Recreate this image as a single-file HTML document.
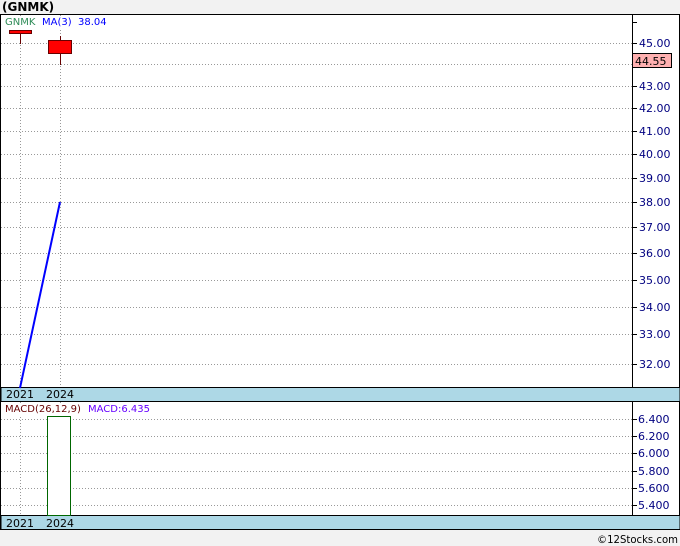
<!DOCTYPE html>
<html><head><style>
body{margin:0;background:#f2f2f2;width:680px;height:546px;overflow:hidden}
svg{display:block;font-family:"DejaVu Sans","Liberation Sans",sans-serif}
</style></head><body>
<svg width="680" height="546" xmlns="http://www.w3.org/2000/svg">
<rect x="0" y="0" width="680" height="546" fill="#f2f2f2"/>
<text x="2" y="11" font-size="12" font-weight="bold" fill="#000">(GNMK)</text>
<rect x="0.5" y="14.5" width="679" height="515" fill="#fff" stroke="#000"/>
<g stroke="#999" stroke-dasharray="1,2" stroke-width="1">
<line x1="1" x2="632" y1="43.5" y2="43.5"/><line x1="1" x2="632" y1="64.5" y2="64.5"/>
<line x1="1" x2="632" y1="86.5" y2="86.5"/><line x1="1" x2="632" y1="108.5" y2="108.5"/>
<line x1="1" x2="632" y1="131.5" y2="131.5"/><line x1="1" x2="632" y1="154.5" y2="154.5"/>
<line x1="1" x2="632" y1="178.5" y2="178.5"/><line x1="1" x2="632" y1="202.5" y2="202.5"/>
<line x1="1" x2="632" y1="227.5" y2="227.5"/><line x1="1" x2="632" y1="253.5" y2="253.5"/>
<line x1="1" x2="632" y1="280.5" y2="280.5"/><line x1="1" x2="632" y1="307.5" y2="307.5"/>
<line x1="1" x2="632" y1="334.5" y2="334.5"/><line x1="1" x2="632" y1="364.5" y2="364.5"/>
<line x1="1" x2="632" y1="419.5" y2="419.5"/><line x1="1" x2="632" y1="436.5" y2="436.5"/>
<line x1="1" x2="632" y1="453.5" y2="453.5"/><line x1="1" x2="632" y1="471.5" y2="471.5"/>
<line x1="1" x2="632" y1="488.5" y2="488.5"/><line x1="1" x2="632" y1="505.5" y2="505.5"/>
<line x1="20.5" x2="20.5" y1="15" y2="530"/><line x1="60.5" x2="60.5" y1="15" y2="530"/>
</g>
<line x1="632.5" x2="632.5" y1="14" y2="530" stroke="#000"/>
<g stroke="#000">
<line x1="632" x2="637" y1="22.5" y2="22.5"/><line x1="632" x2="637" y1="43.5" y2="43.5"/><line x1="632" x2="637" y1="86.5" y2="86.5"/>
<line x1="632" x2="637" y1="108.5" y2="108.5"/><line x1="632" x2="637" y1="131.5" y2="131.5"/><line x1="632" x2="637" y1="154.5" y2="154.5"/>
<line x1="632" x2="637" y1="178.5" y2="178.5"/><line x1="632" x2="637" y1="202.5" y2="202.5"/><line x1="632" x2="637" y1="227.5" y2="227.5"/>
<line x1="632" x2="637" y1="253.5" y2="253.5"/><line x1="632" x2="637" y1="280.5" y2="280.5"/><line x1="632" x2="637" y1="307.5" y2="307.5"/>
<line x1="632" x2="637" y1="334.5" y2="334.5"/><line x1="632" x2="637" y1="364.5" y2="364.5"/>
<line x1="632" x2="637" y1="419.5" y2="419.5"/><line x1="632" x2="637" y1="436.5" y2="436.5"/><line x1="632" x2="637" y1="453.5" y2="453.5"/>
<line x1="632" x2="637" y1="471.5" y2="471.5"/><line x1="632" x2="637" y1="488.5" y2="488.5"/><line x1="632" x2="637" y1="505.5" y2="505.5"/>
</g>
<g font-size="11" fill="#000080">
<text x="639" y="47">45.00</text><text x="639" y="90">43.00</text><text x="639" y="112">42.00</text>
<text x="639" y="135">41.00</text><text x="639" y="158">40.00</text><text x="639" y="182">39.00</text>
<text x="639" y="206">38.00</text><text x="639" y="231">37.00</text><text x="639" y="257">36.00</text>
<text x="639" y="284">35.00</text><text x="639" y="311">34.00</text><text x="639" y="338">33.00</text>
<text x="639" y="368">32.00</text>
<text x="638" y="423">6.400</text><text x="638" y="440">6.200</text><text x="638" y="457">6.000</text>
<text x="638" y="475">5.800</text><text x="638" y="492">5.600</text><text x="638" y="509">5.400</text>
</g>
<rect x="632.5" y="53.5" width="39" height="14" fill="#ffb0b0" stroke="#000"/>
<text x="635" y="65" font-size="11" fill="#000">44.55</text>
<rect x="1" y="387.5" width="679" height="14" fill="#add8e6" stroke="#000"/>
<rect x="1" y="515.5" width="679" height="14" fill="#add8e6" stroke="#000"/>
<g font-size="11" fill="#000"><text x="6" y="398">2021</text><text x="46" y="398">2024</text>
<text x="6" y="527">2021</text><text x="46" y="527">2024</text></g>
<line x1="20.5" x2="20.5" y1="30" y2="44" stroke="#600"/>
<rect x="9.5" y="30.5" width="22" height="3" fill="#f00" stroke="#600"/>
<line x1="60.5" x2="60.5" y1="36" y2="65" stroke="#600"/>
<rect x="48.5" y="40.5" width="23" height="13" fill="#f00" stroke="#600"/>
<line x1="20" y1="388" x2="60" y2="202" stroke="#0000ff" stroke-width="2"/>
<rect x="47.5" y="416.5" width="23" height="99" fill="#fff" stroke="#060"/>
<rect x="3" y="16" width="102" height="12" fill="#fff"/>
<rect x="3" y="403" width="130" height="12" fill="#fff"/>
<text x="5" y="25" font-size="10" fill="#2e8b57">GNMK</text>
<text x="42" y="25" font-size="10" fill="#00f">MA(3)</text>
<text x="78" y="25" font-size="10" fill="#00f">38.04</text>
<text x="5" y="412" font-size="10" fill="#600">MACD(26,12,9)</text>
<text x="88" y="412" font-size="10" fill="#60f">MACD:6.435</text>
<text x="597" y="543" font-size="11" fill="#000" textLength="81" lengthAdjust="spacingAndGlyphs">©12Stocks.com</text>
</svg>
</body></html>
